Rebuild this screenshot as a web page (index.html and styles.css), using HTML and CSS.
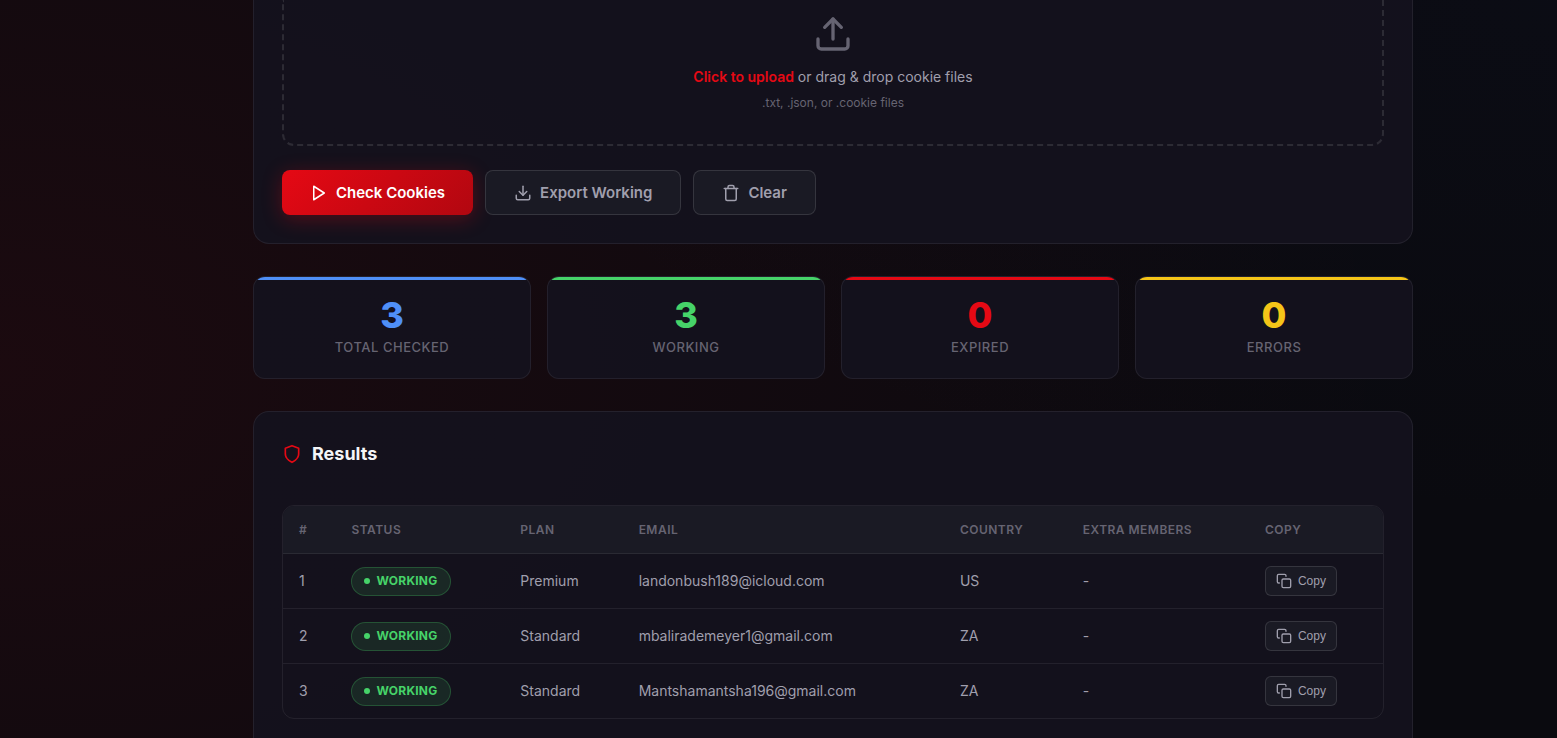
FILE: index.html
```html
<!DOCTYPE html>
<html lang="en">
  <head>
    <meta charset="UTF-8" />
    <meta name="viewport" content="width=device-width, initial-scale=1.0" />
    <title>Cookie Checker</title>
    <link rel="stylesheet" href="styles.css" />
  </head>
  <body>
    <main class="container">
      <section class="card upload-card">
        <label class="drop-zone" for="file-input">
          <svg class="upload-icon" viewBox="0 0 24 24">
            <path d="M21 15v4a2 2 0 0 1-2 2H5a2 2 0 0 1-2-2v-4" />
            <path d="M17 8l-5-5-5 5" />
            <path d="M12 3v12" />
          </svg>
          <span class="drop-text"><strong>Click to upload</strong> or drag &amp; drop cookie files</span>
          <span class="drop-hint">.txt, .json, or .cookie files</span>
          <input type="file" id="file-input" multiple hidden />
        </label>

        <div class="actions">
          <button type="button" class="btn btn-primary">
            <svg viewBox="0 0 24 24"><path d="M5 3l14 9-14 9V3z" /></svg>
            Check Cookies
          </button>
          <button type="button" class="btn btn-secondary">
            <svg viewBox="0 0 24 24">
              <path d="M21 15v4a2 2 0 0 1-2 2H5a2 2 0 0 1-2-2v-4" />
              <path d="M7 10l5 5 5-5" />
              <path d="M12 15V3" />
            </svg>
            Export Working
          </button>
          <button type="button" class="btn btn-secondary">
            <svg viewBox="0 0 24 24">
              <path d="M3 6h18" />
              <path d="M19 6v14a2 2 0 0 1-2 2H7a2 2 0 0 1-2-2V6" />
              <path d="M8 6V4a2 2 0 0 1 2-2h4a2 2 0 0 1 2 2v2" />
            </svg>
            Clear
          </button>
        </div>
      </section>

      <section class="stats">
        <div class="stat total">
          <div class="stat-value">3</div>
          <div class="stat-label">Total Checked</div>
        </div>
        <div class="stat working">
          <div class="stat-value">3</div>
          <div class="stat-label">Working</div>
        </div>
        <div class="stat expired">
          <div class="stat-value">0</div>
          <div class="stat-label">Expired</div>
        </div>
        <div class="stat errors">
          <div class="stat-value">0</div>
          <div class="stat-label">Errors</div>
        </div>
      </section>

      <section class="card results-card">
        <h2 class="card-title">
          <svg viewBox="0 0 24 24"><path d="M12 22s8-4 8-10V5l-8-3-8 3v7c0 6 8 10 8 10z" /></svg>
          Results
        </h2>

        <div class="table-wrap">
          <table>
            <thead>
              <tr>
                <th>#</th>
                <th>Status</th>
                <th>Plan</th>
                <th>Email</th>
                <th>Country</th>
                <th>Extra Members</th>
                <th>Copy</th>
              </tr>
            </thead>
            <tbody>
              <tr>
                <td>1</td>
                <td><span class="badge">Working</span></td>
                <td>Premium</td>
                <td>landonbush189@icloud.com</td>
                <td>US</td>
                <td>-</td>
                <td>
                  <button type="button" class="btn-copy">
                    <svg viewBox="0 0 24 24">
                      <rect x="9" y="9" width="13" height="13" rx="2" />
                      <path d="M5 15H4a2 2 0 0 1-2-2V4a2 2 0 0 1 2-2h9a2 2 0 0 1 2 2v1" />
                    </svg>
                    Copy
                  </button>
                </td>
              </tr>
              <tr>
                <td>2</td>
                <td><span class="badge">Working</span></td>
                <td>Standard</td>
                <td>mbalirademeyer1@gmail.com</td>
                <td>ZA</td>
                <td>-</td>
                <td>
                  <button type="button" class="btn-copy">
                    <svg viewBox="0 0 24 24">
                      <rect x="9" y="9" width="13" height="13" rx="2" />
                      <path d="M5 15H4a2 2 0 0 1-2-2V4a2 2 0 0 1 2-2h9a2 2 0 0 1 2 2v1" />
                    </svg>
                    Copy
                  </button>
                </td>
              </tr>
              <tr>
                <td>3</td>
                <td><span class="badge">Working</span></td>
                <td>Standard</td>
                <td>Mantshamantsha196@gmail.com</td>
                <td>ZA</td>
                <td>-</td>
                <td>
                  <button type="button" class="btn-copy">
                    <svg viewBox="0 0 24 24">
                      <rect x="9" y="9" width="13" height="13" rx="2" />
                      <path d="M5 15H4a2 2 0 0 1-2-2V4a2 2 0 0 1 2-2h9a2 2 0 0 1 2 2v1" />
                    </svg>
                    Copy
                  </button>
                </td>
              </tr>
            </tbody>
          </table>
        </div>
      </section>
    </main>
  </body>
</html>
```

FILE: styles.css
```css
:root {
  --bg: #0a0a0f;
  --card: rgba(20, 18, 30, 0.9);
  --surface: #1a1a24;
  --border: rgba(255, 255, 255, 0.07);
  --text: #f5f5f7;
  --text-muted: #a09fad;
  --text-dim: #666472;
  --red: #e50914;
  --green: #46d369;
  --blue: #4f8ff7;
  --yellow: #f5c518;
}

* {
  margin: 0;
  padding: 0;
  box-sizing: border-box;
}

body {
  font-family: Inter, "Liberation Sans", sans-serif;
  background:
    radial-gradient(ellipse 90% 120% at 0% 50%, rgba(229, 9, 20, 0.08) 0%, transparent 100%),
    radial-gradient(ellipse at 100% 0%, rgba(30, 50, 120, 0.05) 0%, transparent 50%),
    var(--bg);
  color: var(--text);
  min-height: 100vh;
  line-height: 1.6;
}

.container {
  display: flex;
  flex-direction: column;
  gap: 32px;
  min-height: 100vh;
  margin-left: 109px;
  padding: 0 144px;
}

.card {
  background: var(--card);
  border: 1px solid var(--border);
  border-radius: 16px;
  padding: 28px;
}

svg {
  fill: none;
  stroke: currentColor;
  stroke-width: 2;
  stroke-linecap: round;
  stroke-linejoin: round;
}

/* Upload */
.upload-card {
  border-top: none;
  border-radius: 0 0 16px 16px;
  padding-top: 0;
}

.drop-zone {
  display: flex;
  flex-direction: column;
  align-items: center;
  padding: 14px 32px 30px;
  border: 2px dashed rgba(255, 255, 255, 0.11);
  border-top: none;
  border-radius: 0 0 12px 12px;
  cursor: pointer;
}

.upload-icon {
  width: 40px;
  height: 40px;
  margin-bottom: 12px;
  color: var(--text-dim);
}

.drop-text {
  font-size: 14px;
  line-height: 22px;
  color: var(--text-muted);
}

.drop-text strong {
  color: var(--red);
  font-weight: 600;
}

.drop-hint {
  margin-top: 4px;
  font-size: 12px;
  line-height: 22px;
  color: var(--text-dim);
}

.actions {
  display: flex;
  gap: 12px;
  margin-top: 24px;
}

.btn {
  display: inline-flex;
  align-items: center;
  gap: 8px;
  height: 45px;
  padding: 0 28px;
  border: 1px solid transparent;
  border-radius: 8px;
  font-family: inherit;
  font-size: 15px;
  font-weight: 600;
  cursor: pointer;
}

.btn svg {
  width: 18px;
  height: 18px;
}

.btn-primary {
  border: none;
  background: linear-gradient(135deg, #e50914, #b20710);
  color: #fff;
  box-shadow: 0 4px 20px rgba(229, 9, 20, 0.3);
}

.btn-secondary {
  background: var(--surface);
  border-color: rgba(255, 255, 255, 0.12);
  color: var(--text-muted);
}

/* Stats */
.stats {
  display: grid;
  grid-template-columns: repeat(4, 1fr);
  gap: 16px;
}

.stat {
  overflow: hidden;
  padding-bottom: 20px;
  background: var(--card);
  border: 1px solid var(--border);
  border-radius: 12px;
  text-align: center;
}

.stat::before {
  content: "";
  display: block;
  height: 3px;
  margin-bottom: 17px;
  background: currentColor;
}

.stat-value {
  font-size: 36px;
  font-weight: 800;
  line-height: 36px;
}

.stat-label {
  margin-top: 4px;
  font-size: 13px;
  font-weight: 500;
  line-height: 21px;
  letter-spacing: 0.04em;
  text-transform: uppercase;
  color: var(--text-dim);
}

.total { color: var(--blue); }
.working { color: var(--green); }
.expired { color: var(--red); }
.errors { color: var(--yellow); }

/* Results */
.results-card {
  flex: 1;
  border-bottom: none;
  border-radius: 16px 16px 0 0;
  padding-bottom: 0;
}

.card-title {
  display: flex;
  align-items: center;
  gap: 10px;
  margin-bottom: 38px;
  font-size: 18px;
  font-weight: 700;
  line-height: 27px;
}

.card-title svg {
  width: 20px;
  height: 20px;
  color: var(--red);
}

.table-wrap {
  overflow: hidden;
  border: 1px solid var(--border);
  border-radius: 12px;
}

table {
  width: 100%;
  border-spacing: 0;
  font-size: 14px;
}

th {
  height: 48px;
  padding: 0 16px;
  background: var(--surface);
  border-bottom: 1px solid var(--border);
  font-size: 12px;
  font-weight: 600;
  letter-spacing: 0.04em;
  text-align: left;
  text-transform: uppercase;
  color: var(--text-dim);
}

td {
  height: 55px;
  padding: 0 16px;
  border-bottom: 1px solid var(--border);
  color: var(--text-muted);
}

tbody tr:last-child td {
  height: 54px;
  border-bottom: none;
}

.badge {
  display: inline-flex;
  align-items: center;
  gap: 6px;
  height: 29px;
  padding: 0 12px;
  background: rgba(70, 211, 105, 0.12);
  border: 1px solid rgba(70, 211, 105, 0.25);
  border-radius: 20px;
  font-size: 12px;
  font-weight: 700;
  letter-spacing: 0.02em;
  text-transform: uppercase;
  vertical-align: middle;
  color: var(--green);
}

.badge::before {
  content: "";
  width: 6px;
  height: 6px;
  border-radius: 50%;
  background: currentColor;
}

.btn-copy {
  display: inline-flex;
  align-items: center;
  gap: 6px;
  height: 30px;
  padding: 0 10px;
  background: var(--surface);
  border: 1px solid rgba(255, 255, 255, 0.12);
  border-radius: 6px;
  font-family: "Liberation Sans", Arial, sans-serif;
  font-size: 12px;
  vertical-align: middle;
  color: var(--text-muted);
  cursor: pointer;
}

.btn-copy svg {
  width: 16px;
  height: 16px;
}
```
